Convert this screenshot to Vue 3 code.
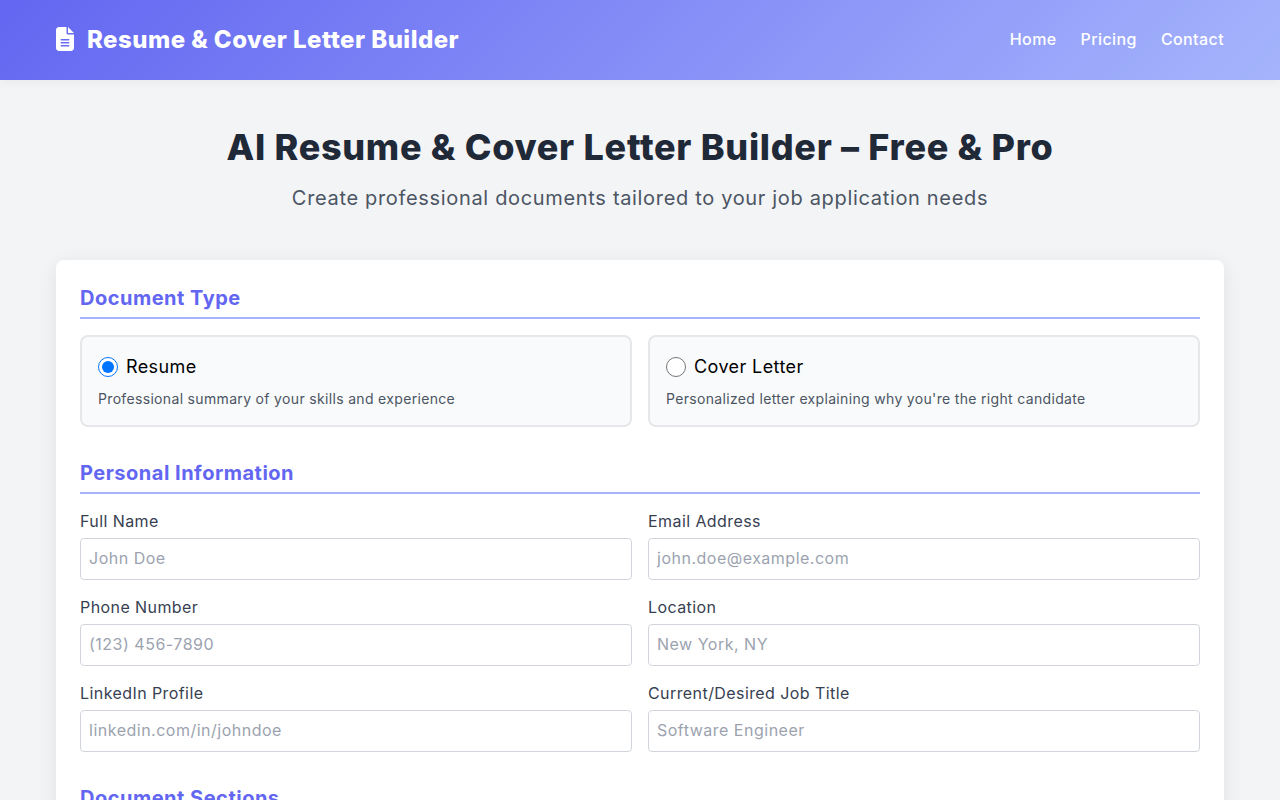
<script setup>
const nav = ['Home', 'Pricing', 'Contact']
const docTypes = [
  { name: 'Resume', desc: 'Professional summary of your skills and experience', checked: true },
  { name: 'Cover Letter', desc: "Personalized letter explaining why you're the right candidate", checked: false }
]
const fields = [
  { label: 'Full Name', ph: 'John Doe' },
  { label: 'Email Address', ph: 'john.doe@example.com' },
  { label: 'Phone Number', ph: '(123) 456-7890' },
  { label: 'Location', ph: 'New York, NY' },
  { label: 'LinkedIn Profile', ph: 'linkedin.com/in/johndoe' },
  { label: 'Current/Desired Job Title', ph: 'Software Engineer' }
]
</script>

<template>
  <div class="page">
    <header class="topbar">
      <div class="brand">
        <svg class="logo" viewBox="0 0 384 512" aria-hidden="true">
          <path fill="#fff" d="M64 0C28.700 0 0 28.700 0 64V448c0 35.300 28.700 64 64 64H320c35.300 0 64-28.700 64-64V160H256c-17.700 0-32-14.300-32-32V0H64zM256 0V128H384L256 0zM112 256H272c8.800 0 16 7.200 16 16s-7.200 16-16 16H112c-8.800 0-16-7.200-16-16s7.200-16 16-16zm0 64H272c8.800 0 16 7.200 16 16s-7.200 16-16 16H112c-8.800 0-16-7.200-16-16s7.200-16 16-16zm0 64H272c8.800 0 16 7.200 16 16s-7.200 16-16 16H112c-8.800 0-16-7.200-16-16s7.200-16 16-16z"/>
        </svg>
        <span class="brand-name">Resume &amp; Cover Letter Builder</span>
      </div>
      <nav class="nav">
        <a v-for="n in nav" :key="n" class="nav-link">{{ n }}</a>
      </nav>
    </header>

    <main class="main">
      <div class="hero">
        <h1>AI Resume &amp; Cover Letter Builder – Free &amp; Pro</h1>
        <p>Create professional documents tailored to your job application needs</p>
      </div>

      <section class="card">
        <h2 class="section-title">Document Type</h2>
        <div class="grid doc-grid">
          <label v-for="d in docTypes" :key="d.name" class="doc-option">
            <span class="doc-head">
              <input type="radio" name="doctype" :checked="d.checked" />
              <span class="doc-name">{{ d.name }}</span>
            </span>
            <span class="doc-desc">{{ d.desc }}</span>
          </label>
        </div>

        <h2 class="section-title">Personal Information</h2>
        <div class="grid form-grid">
          <div v-for="f in fields" :key="f.label" class="field">
            <label class="field-label">{{ f.label }}</label>
            <input class="field-input" type="text" :placeholder="f.ph" />
          </div>
        </div>

        <h2 class="section-title">Document Sections</h2>
      </section>
    </main>
  </div>
</template>

<style>
html, body { margin: 0; height: 800px; overflow: hidden; background: #f3f4f6; }
</style>

<style scoped>
.page {
  height: 800px;
  overflow: hidden;
  background: #f3f4f6;
  font-family: Inter, "Open Sans", sans-serif;
  color: #1f2937;
}
.topbar {
  height: 80px;
  box-sizing: border-box;
  padding: 0 56px 2px;
  display: flex;
  align-items: center;
  justify-content: space-between;
  background: linear-gradient(135deg, #6366f1, #a5b4fc);
  box-shadow: 0 2px 10px rgba(0,0,0,0.05);
}
.brand { display: flex; align-items: center; gap: 13px; }
.logo { width: 18px; height: 24px; display: block; }
.brand-name { font-size: 24px; font-weight: 800; color: #fff; letter-spacing: 0.47px; }
.nav { display: flex; gap: 24px; }
.nav-link { color: #fff; font-size: 16px; font-weight: 500; letter-spacing: 0.4px; }
.main { padding: 40px 56px 0; }
.hero { text-align: center; margin-bottom: 46px; }
.hero h1 { margin: 0 0 8px; font-size: 36px; line-height: 54px; font-weight: 800; color: #1f2937; letter-spacing: 0.7px; }
.hero p { margin: 0; font-size: 20px; line-height: 32px; color: #4b5563; letter-spacing: 0.67px; }
.card {
  background: #fff;
  border-radius: 8px;
  padding: 24px;
  box-shadow: 0 4px 20px rgba(0,0,0,0.08);
  height: 700px;
  box-sizing: border-box;
}
.section-title {
  margin: 0 0 16px;
  padding-bottom: 5px;
  font-size: 20px;
  line-height: 28px;
  font-weight: 700;
  color: #6366f1;
  letter-spacing: 0.5px;
  border-bottom: 2px solid #a5b4fc;
}
.grid { display: grid; grid-template-columns: 1fr 1fr; column-gap: 16px; }
.doc-grid { margin-bottom: 32px; }
.doc-option {
  box-sizing: border-box;
  height: 92px;
  padding: 16px;
  border: 2px solid #e5e7eb;
  border-radius: 8px;
  background: #f9fafb;
  display: flex;
  flex-direction: column;
}
.doc-head { display: flex; align-items: center; gap: 8px; height: 28px; margin-bottom: 8px; }
.doc-head input { width: 20px; height: 20px; margin: 0; accent-color: #0075ff; }
.doc-name { font-size: 18px; color: #000; letter-spacing: 0.4px; }
.doc-desc { font-size: 14px; line-height: 21px; color: #4b5563; letter-spacing: 0.33px; }
.form-grid { row-gap: 16px; margin-bottom: 32px; }
.field { height: 70px; }
.field-label { display: block; font-size: 16px; line-height: 22px; font-weight: 400; color: #374151; margin-bottom: 6px; letter-spacing: 0.42px; }
.field-input {
  display: block;
  width: 100%;
  box-sizing: border-box;
  height: 42px;
  padding: 7px 8px 9px;
  border: 1px solid #d1d5db;
  border-radius: 4px;
  font-family: inherit;
  font-size: 16px;
  background: #fff;
  outline: none;
}
.field-input::placeholder { color: #9ca3af; opacity: 1; letter-spacing: 0.5px; }
</style>
